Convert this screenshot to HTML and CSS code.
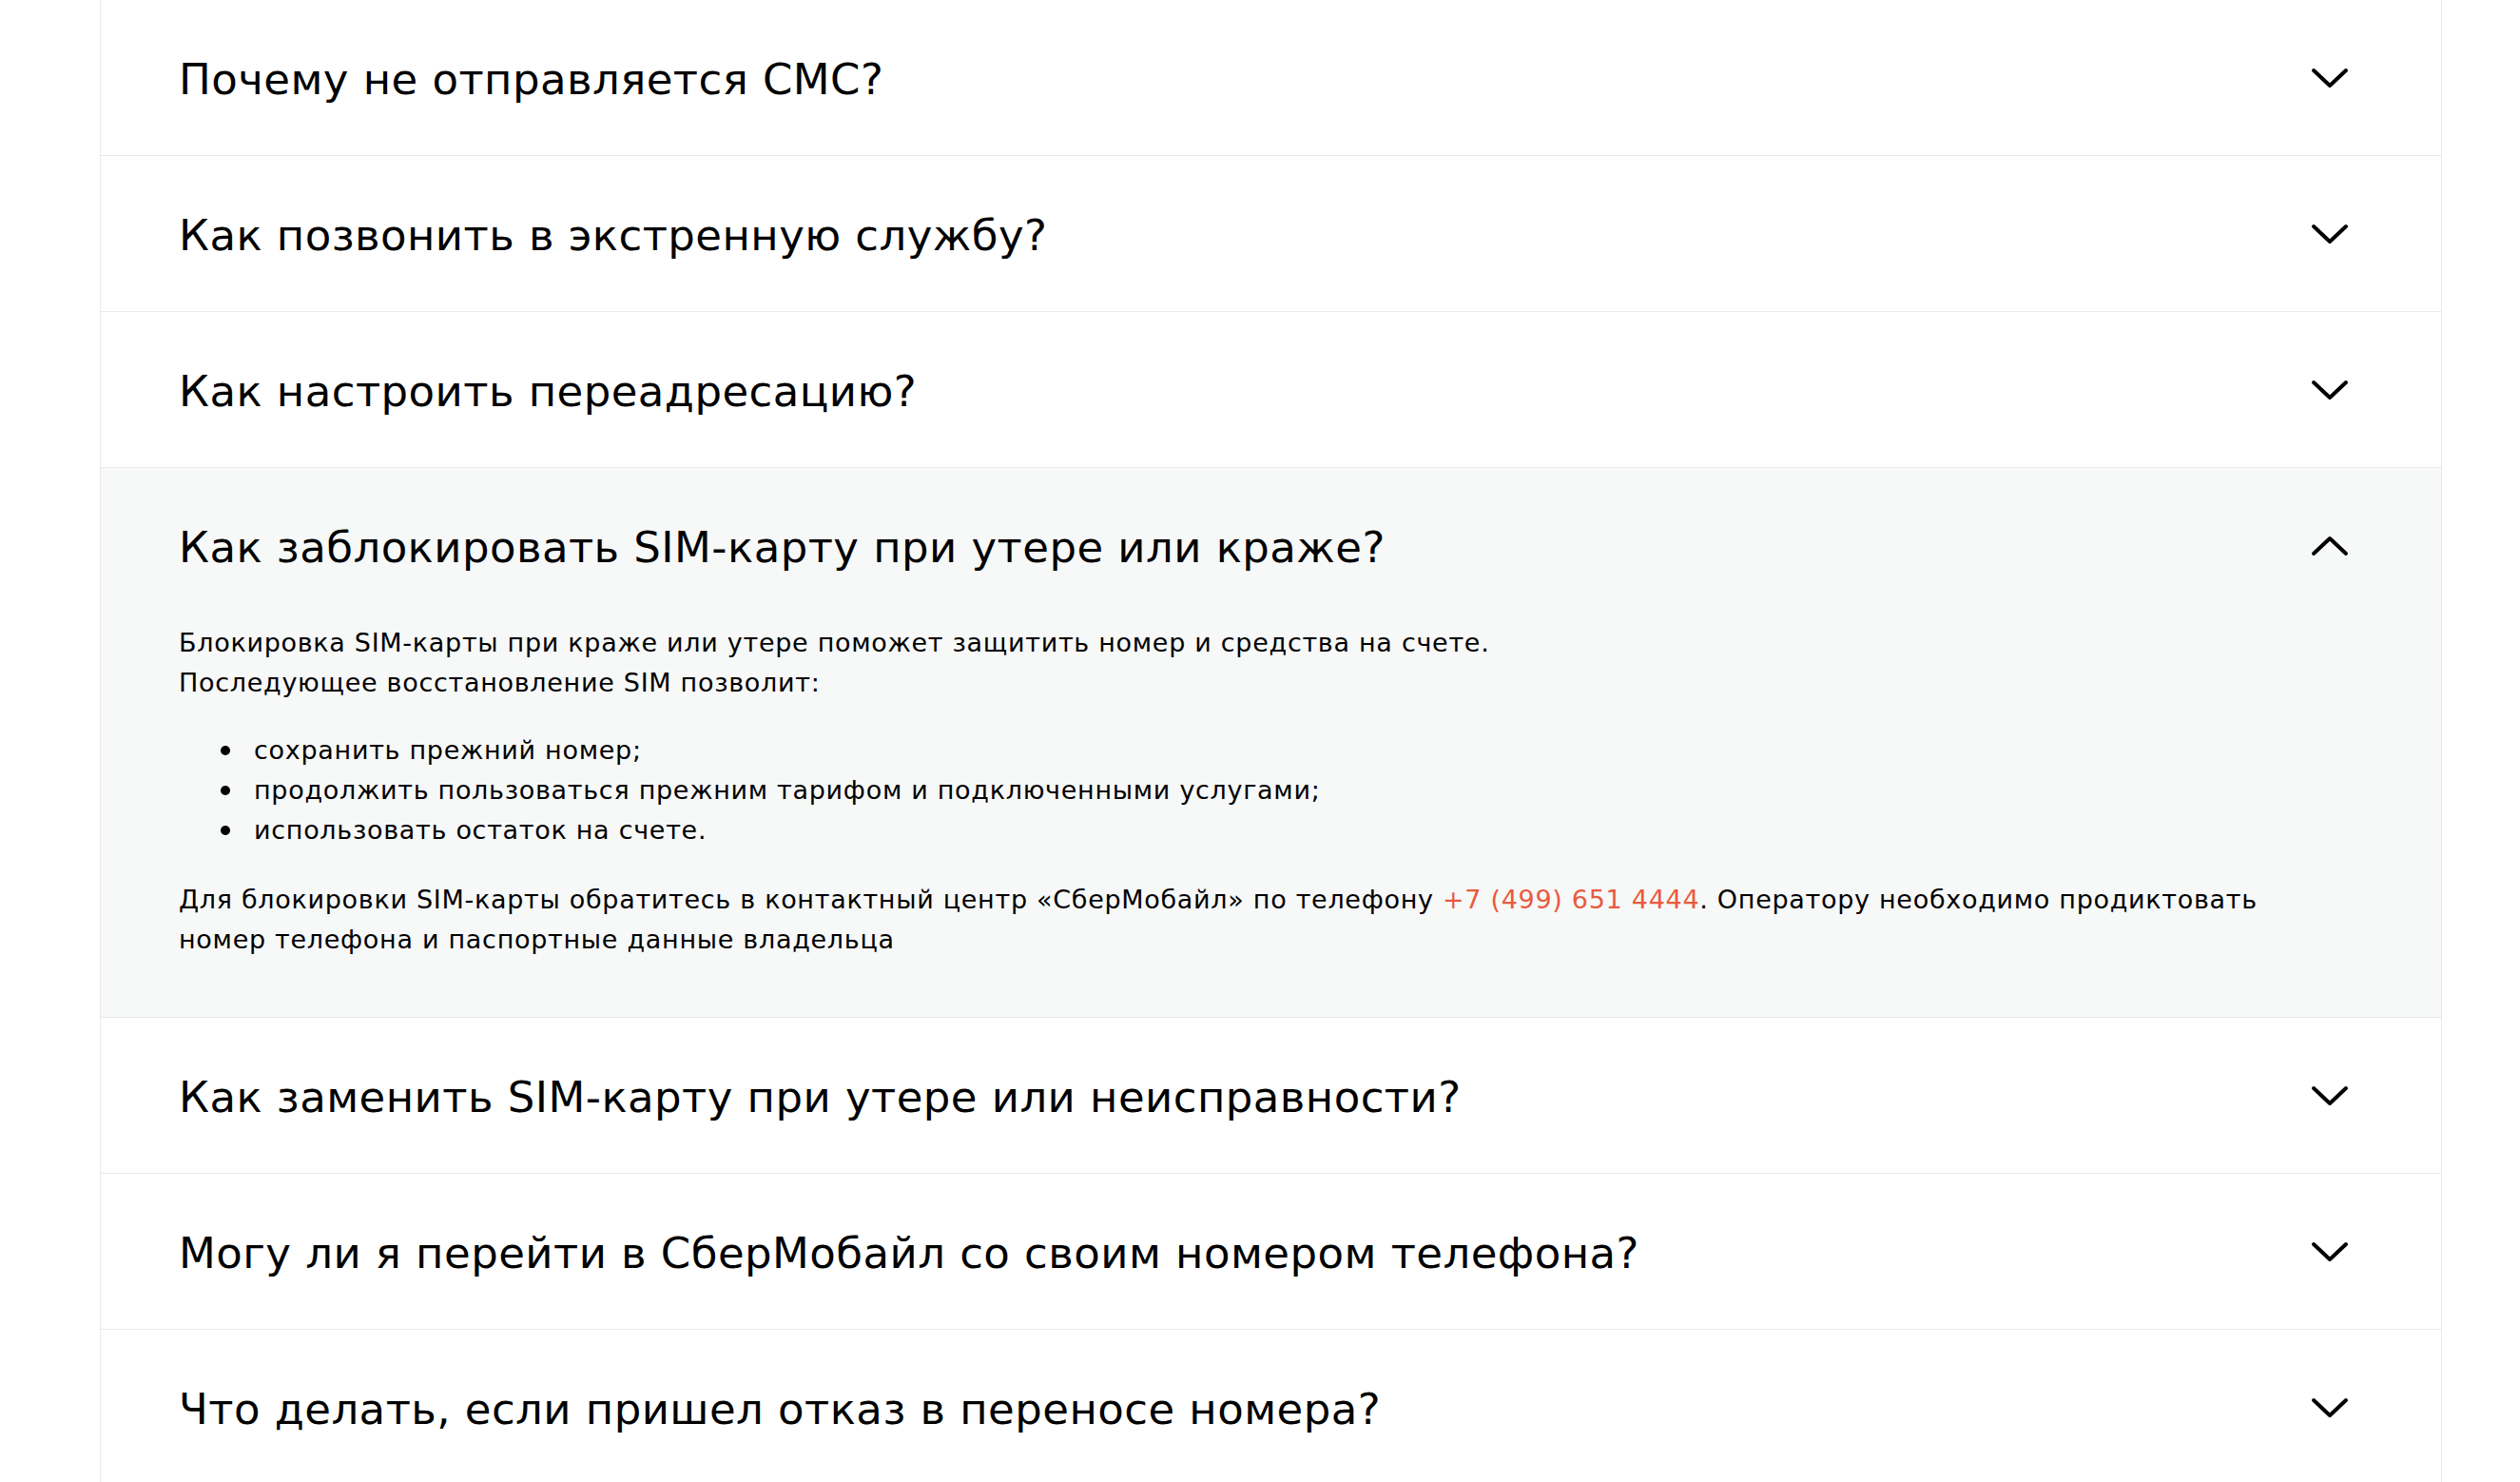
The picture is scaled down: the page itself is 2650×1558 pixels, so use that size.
FILE: index.html
```html
<!DOCTYPE html>
<html lang="ru">
<head>
<meta charset="utf-8">
<title>FAQ</title>
<link rel="stylesheet" href="styles.css">
</head>
<body>
<div class="faq">
  <div class="item">
    <div class="head"><span class="q">Почему не отправляется СМС?</span><svg class="chev" viewBox="0 0 40 22"><polyline points="3,3 20,19 37,3"/></svg></div>
  </div>
  <div class="item">
    <div class="head"><span class="q">Как позвонить в экстренную службу?</span><svg class="chev" viewBox="0 0 40 22"><polyline points="3,3 20,19 37,3"/></svg></div>
  </div>
  <div class="item">
    <div class="head"><span class="q">Как настроить переадресацию?</span><svg class="chev" viewBox="0 0 40 22"><polyline points="3,3 20,19 37,3"/></svg></div>
  </div>
  <div class="item open">
    <div class="head"><span class="q">Как заблокировать SIM-карту при утере или краже?</span><svg class="chev" viewBox="0 0 40 22"><polyline points="3,19 20,3 37,19"/></svg></div>
    <div class="body">
      <p>Блокировка SIM-карты при краже или утере поможет защитить номер и средства на счете.<br>Последующее восстановление SIM позволит:</p>
      <ul>
        <li>сохранить прежний номер;</li>
        <li>продолжить пользоваться прежним тарифом и подключенными услугами;</li>
        <li>использовать остаток на счете.</li>
      </ul>
      <p>Для блокировки SIM-карты обратитесь в контактный центр «СберМобайл» по телефону <a class="tel" href="#">+7&nbsp;(499)&nbsp;651&nbsp;4444</a>. Оператору необходимо продиктовать номер телефона и паспортные данные владельца</p>
    </div>
  </div>
  <div class="item">
    <div class="head"><span class="q">Как заменить SIM-карту при утере или неисправности?</span><svg class="chev" viewBox="0 0 40 22"><polyline points="3,3 20,19 37,3"/></svg></div>
  </div>
  <div class="item">
    <div class="head"><span class="q">Могу ли я перейти в СберМобайл со своим номером телефона?</span><svg class="chev" viewBox="0 0 40 22"><polyline points="3,3 20,19 37,3"/></svg></div>
  </div>
  <div class="item">
    <div class="head"><span class="q">Что делать, если пришел отказ в переносе номера?</span><svg class="chev" viewBox="0 0 40 22"><polyline points="3,3 20,19 37,3"/></svg></div>
  </div>
</div>
</body>
</html>
```
FILE: styles.css
```css
html, body {
  margin: 0;
  padding: 0;
  background: #ffffff;
}
body {
  font-family: "DejaVu Sans", sans-serif;
  color: #000;
  overflow: hidden;
}
.faq {
  margin-left: 105px;
  width: 2463px;
  box-sizing: border-box;
  border-left: 1px solid #e9e9e9;
  border-right: 1px solid #e9e9e9;
}
.item {
  border-bottom: 1px solid #e9e9e9;
  background: #fff;
}
.item.open {
  background: #f7f8f8;
  padding-bottom: 60px;
}
.head {
  height: 163px;
  display: flex;
  align-items: center;
  justify-content: space-between;
  padding: 4px 99px 0 82px;
  box-sizing: border-box;
}
.q {
  font-size: 45px;
  line-height: 56px;
  letter-spacing: 0.45px;
}
.chev {
  width: 40px;
  height: 22px;
  fill: none;
  stroke: #000;
  stroke-width: 4;
  stroke-linecap: round;
  stroke-linejoin: round;
  margin-right: -2px;
  margin-top: -4px;
}
.body {
  padding: 0 99px 0 82px;
  font-size: 27px;
  line-height: 42px;
  letter-spacing: 0.7px;
}
.body p {
  margin: 0;
}
.body ul {
  margin: 29px 0 31px;
  padding-left: 79px;
  list-style: none;
}
.body li {
  position: relative;
}
.body li::before {
  content: "";
  position: absolute;
  left: -35px;
  top: 16px;
  width: 10px;
  height: 10px;
  border-radius: 50%;
  background: #000;
}
.tel {
  color: #ea5a3d;
  text-decoration: none;
}
```
